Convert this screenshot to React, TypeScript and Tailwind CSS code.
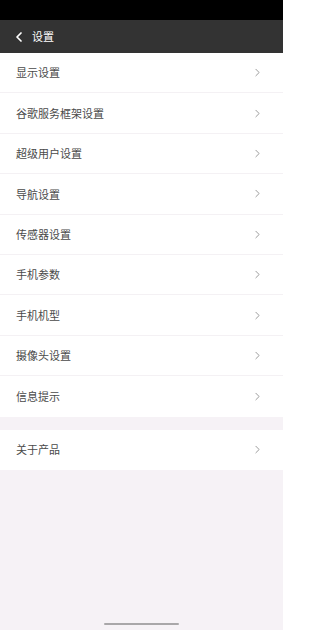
import { ChevronLeft, ChevronRight } from 'lucide-react'

const items = [
  '显示设置',
  '谷歌服务框架设置',
  '超级用户设置',
  '导航设置',
  '传感器设置',
  '手机参数',
  '手机机型',
  '摄像头设置',
  '信息提示',
]

function Row({ label, last }: { label: string; last?: boolean }) {
  return (
    <div
      className={`flex h-[40.4px] items-center justify-between bg-white pl-4 pr-[19px] ${
        last ? '' : 'border-b border-[#f4f1f4]'
      }`}
    >
      <span className="text-[11px] text-[#4a4a4a]">{label}</span>
      <ChevronRight className="h-[13px] w-[13px] text-[#999999]" strokeWidth={1.8} />
    </div>
  )
}

export default function App() {
  return (
    <div
      className="flex h-[630px] w-[283px] flex-col bg-[#f6f2f6]"
      style={{ fontFamily: '"Noto Sans CJK SC", "Noto Sans", sans-serif' }}
    >
      <div className="h-[20px] bg-black" />
      <div className="flex h-[33px] items-center bg-[#333333] pl-[11px]">
        <ChevronLeft className="h-[16px] w-[16px] text-white" strokeWidth={2.6} />
        <span className="ml-[5px] text-[11px] text-white">设置</span>
      </div>

      <div>
        {items.map((label, i) => (
          <Row key={label} label={label} last={i === items.length - 1} />
        ))}
      </div>

      <div className="mt-[13px]">
        <Row label="关于产品" last />
      </div>

      <div className="flex flex-1 items-end justify-center pb-[5px]">
        <div className="h-[2px] w-[75px] rounded-full bg-[#a9a7a9]" />
      </div>
    </div>
  )
}
